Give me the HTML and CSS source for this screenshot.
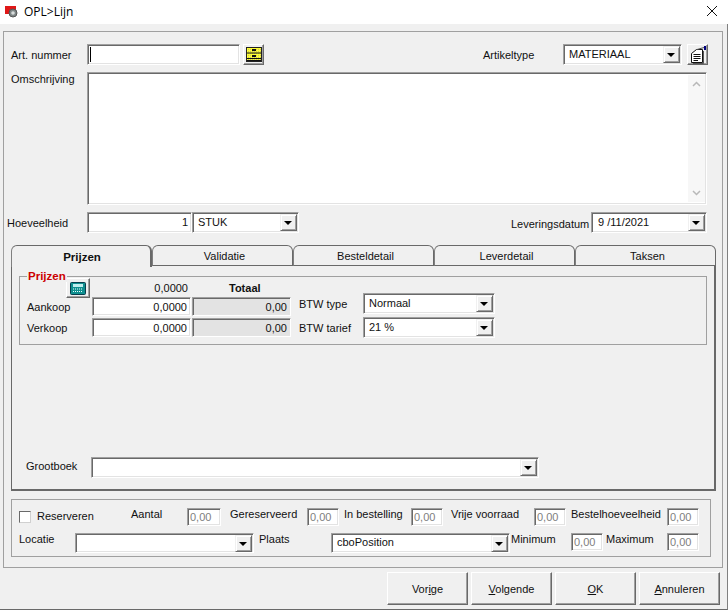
FILE: index.html
```html
<!DOCTYPE html>
<html lang="en">
<head>
<meta charset="UTF-8" />
<title>OPL&gt;Lijn</title>
<link rel="stylesheet" href="styles.css">
</head>
<body>

<div class="window">
  <header class="titlebar">
    <svg class="app-icon" width="16" height="16" viewBox="0 0 16 16">
      <rect x="0" y="3" width="11" height="8" fill="#e01818"/>
      <circle cx="8" cy="10" r="4" fill="#7e8686" stroke="#555" stroke-width="1"/>
      <circle cx="8" cy="10" r="1.8" fill="#d8dcdc"/>
    </svg>
    <span class="title">OPL&gt;Lijn</span>
    <svg class="close" width="12" height="12" viewBox="0 0 12 12">
      <path d="M1 1 L11 11 M11 1 L1 11" stroke="#111" stroke-width="1" fill="none"/>
    </svg>
  </header>

  <div class="client">
    <main class="panel">
      <div class="row">
        <label class="lbl-main">Art. nummer</label>
        <div class="field art-input"><span class="caret"></span></div>
        <button class="tool tool-drawer">
          <svg width="16" height="15" viewBox="0 0 16 15">
            <defs>
              <pattern id="dither" width="2" height="2" patternUnits="userSpaceOnUse">
                <rect width="2" height="2" fill="#ffff33"/>
                <rect width="1" height="1" fill="#c8c860"/>
              </pattern>
            </defs>
            <rect x="0.5" y="0.5" width="15" height="14" fill="url(#dither)" stroke="#222"/>
            <path d="M1 6 H15 M1 11.5 H15 M1 13.5 H15" stroke="#111"/>
            <rect x="6" y="2" width="4" height="2" fill="#111"/>
            <rect x="6" y="8" width="4" height="2" fill="#111"/>
          </svg>
        </button>
        <label class="lbl-type">Artikeltype</label>
        <div class="field combo type-combo"><span class="combo-text">MATERIAAL</span><span class="drop"></span></div>
        <button class="tool tool-props">
          <svg width="18" height="18" viewBox="0 0 18 18">
            <path d="M2.5 7.5 L7.5 3.5 H13.5 V16.5 H2.5 Z" fill="#fff" stroke="#111"/>
            <path d="M4.5 8.5 H11.5 M4.5 10.5 H11.5 M4.5 12.5 H11.5 M4.5 14.5 H9" stroke="#111"/>
            <path d="M8 3.5 L15 1.5 M14.5 5 V17.5 H4" stroke="#555" fill="none"/>
            <rect x="15" y="0" width="2" height="4" fill="#000080"/>
          </svg>
        </button>
      </div>

      <div class="row row-memo">
        <label class="lbl-main">Omschrijving</label>
        <div class="field memo">
          <div class="scrollbar">
            <svg width="9" height="6" viewBox="0 0 9 6"><path d="M1 5 L4.5 1.5 L8 5" stroke="#b8b8b8" stroke-width="1.5" fill="none"/></svg>
            <svg width="9" height="6" viewBox="0 0 9 6"><path d="M1 1 L4.5 4.5 L8 1" stroke="#b8b8b8" stroke-width="1.5" fill="none"/></svg>
          </div>
        </div>
      </div>

      <div class="row row-qty">
        <label class="lbl-main">Hoeveelheid</label>
        <div class="field qty-input">1</div>
        <div class="field combo unit-combo"><span class="combo-text">STUK</span><span class="drop"></span></div>
        <label class="lbl-date">Leveringsdatum</label>
        <div class="field combo date-combo"><span class="combo-text">9 /11/2021</span><span class="drop"></span></div>
      </div>

      <section class="tabs">
        <ul class="tab-strip">
          <li class="tab active">Prijzen</li>
          <li class="tab">Validatie</li>
          <li class="tab">Besteldetail</li>
          <li class="tab">Leverdetail</li>
          <li class="tab">Taksen</li>
        </ul>
        <div class="tab-body">
          <div class="group prices">
            <span class="legend">Prijzen</span>
            <div class="price-grid">
              <button class="tool tool-calc">
                <svg width="16" height="13" viewBox="0 0 16 13">
                  <rect x="0.5" y="0.5" width="15" height="12" rx="1" fill="#0f8f8f" stroke="#063c4c"/>
                  <rect x="3" y="2" width="10" height="3" fill="#bfeeee"/>
                  <path d="M3 7 H13 M3 9.5 H13" stroke="#e8ffff" stroke-dasharray="1 1"/>
                </svg>
              </button>
              <span class="head-num">0,0000</span>
              <span class="head-total">Totaal</span>
              <label class="price-lbl">Aankoop</label>
              <div class="field price-input">0,0000</div>
              <div class="field price-total">0,00</div>
              <label class="price-lbl">Verkoop</label>
              <div class="field price-input">0,0000</div>
              <div class="field price-total">0,00</div>
            </div>
            <div class="btw">
              <div class="btw-row">
                <label class="btw-lbl">BTW type</label>
                <div class="field combo btw-combo"><span class="combo-text">Normaal</span><span class="drop"></span></div>
              </div>
              <div class="btw-row">
                <label class="btw-lbl">BTW tarief</label>
                <div class="field combo btw-combo"><span class="combo-text">21 %</span><span class="drop"></span></div>
              </div>
            </div>
          </div>
          <div class="row ledger">
            <label class="ledger-lbl">Grootboek</label>
            <div class="field combo ledger-combo"><span class="combo-text"></span><span class="drop"></span></div>
          </div>
        </div>
      </section>

      <section class="group stock">
        <div class="stock-row stock-top">
          <label class="check"><span class="checkbox"></span>Reserveren</label>
          <span>Aantal</span>
          <div class="field small wide">0,00</div>
          <span>Gereserveerd</span>
          <div class="field small">0,00</div>
          <span>In bestelling</span>
          <div class="field small">0,00</div>
          <span>Vrije voorraad</span>
          <div class="field small">0,00</div>
          <span>Bestelhoeveelheid</span>
          <div class="field small">0,00</div>
        </div>
        <div class="stock-row stock-bottom">
          <span>Locatie</span>
          <div class="field combo stock-combo"><span class="combo-text"></span><span class="drop"></span></div>
          <span>Plaats</span>
          <div class="field combo stock-combo"><span class="combo-text">cboPosition</span><span class="drop"></span></div>
          <span>Minimum</span>
          <div class="field small">0,00</div>
          <span>Maximum</span>
          <div class="field small">0,00</div>
        </div>
      </section>
    </main>

    <footer class="actions">
      <button class="action">Vor<u>i</u>ge</button>
      <button class="action"><u>V</u>olgende</button>
      <button class="action"><u>O</u>K</button>
      <button class="action"><u>A</u>nnuleren</button>
    </footer>
  </div>
</div>

</body>
</html>
```

FILE: styles.css
```css
* {
  box-sizing: border-box;
}
body {
  margin: 0;
  font-family: "Liberation Sans", Arial, sans-serif;
  font-size: 11px;
  color: #111;
  background: #f0f0f0;
}
.window {
  width: 728px;
  height: 610px;
  overflow: hidden;
  display: flex;
  flex-direction: column;
}

/* title bar */
.titlebar {
  height: 24px;
  background: #fff;
  display: flex;
  align-items: center;
  padding: 0 10px 2px 5px;
}
.title {
  margin-left: 3px;
  font-family: "Open Sans", sans-serif;
  font-size: 12px;
  color: #000;
}
.close {
  margin-left: auto;
}

.client {
  flex: 1;
  border-right: 1px solid #808080;
  border-bottom: 1px solid #696969;
}

/* main frame */
.panel {
  margin: 7px 0 0 3px;
  width: 720px;
  height: 537px;
  border: 1px solid #a0a0a0;
  padding: 12px 0 0 0;
}
.row {
  display: flex;
  align-items: center;
}
.lbl-main {
  width: 83px;
  padding-left: 7px;
}
.row-memo {
  margin-top: 7px;
  align-items: flex-start;
}
.row-memo .lbl-main {
  padding-top: 1px;
}
.row-qty {
  margin-top: 7px;
}
.row-qty .lbl-main {
  padding-left: 3px;
  padding-top: 1px;
}

/* sunken controls */
.field {
  height: 21px;
  background: #fff;
  border: 1px solid;
  border-color: #a0a0a0 #fff #fff #a0a0a0;
  box-shadow: inset 1px 1px 0 #696969, inset -1px -1px 0 #e3e3e3;
  display: flex;
  align-items: center;
  flex-shrink: 0;
}
.art-input {
  width: 153px;
  padding-left: 2px;
}
.caret {
  width: 1px;
  height: 15px;
  background: #000;
}
.combo {
  padding: 0 1px 0 5px;
  justify-content: space-between;
}
.combo-text {
  padding-bottom: 2px;
}
.drop {
  width: 17px;
  height: 17px;
  background: #f0f0f0;
  border: 1px solid;
  border-color: #f0f0f0 #696969 #696969 #f0f0f0;
  box-shadow: inset 1px 1px 0 #fff, inset -1px -1px 0 #a0a0a0;
  position: relative;
  flex-shrink: 0;
}
.drop::after {
  content: "";
  position: absolute;
  left: 3px;
  top: 6px;
  border: 4px solid transparent;
  border-top: 4px solid #000;
  border-bottom: 0;
}

/* raised tool buttons */
.tool {
  width: 21px;
  height: 21px;
  padding: 0;
  background: #f0f0f0;
  border: 1px solid;
  border-color: #fff #696969 #696969 #fff;
  box-shadow: inset -1px -1px 0 #a0a0a0;
  display: flex;
  align-items: center;
  justify-content: center;
}
.tool-drawer {
  margin-left: 3px;
}
.lbl-type {
  margin-left: 219px;
  width: 80px;
}
.type-combo {
  width: 119px;
}
.tool-props {
  margin-left: 5px;
}

.memo {
  width: 620px;
  height: 133px;
  justify-content: flex-end;
  align-items: stretch;
  padding: 2px 1px 2px 0;
}
.scrollbar {
  width: 17px;
  background: #f7f7f7;
  display: flex;
  flex-direction: column;
  justify-content: space-between;
  align-items: center;
  padding: 6px 0;
}
.qty-input {
  width: 105px;
  justify-content: flex-end;
  padding: 0 3px 2px 0;
}
.unit-combo {
  width: 107px;
}
.lbl-date {
  margin-left: 212px;
  width: 80px;
  padding-top: 3px;
}
.date-combo {
  width: 116px;
  padding-left: 6px;
}

/* tabs */
.tabs {
  margin: 12px 0 0 7px;
  width: 705px;
  height: 246px;
  display: flex;
  flex-direction: column;
}
.tab-strip {
  list-style: none;
  margin: 0;
  padding: 0;
  display: flex;
  height: 21px;
}
.tab {
  width: 141px;
  height: 21px;
  border: 1px solid #696969;
  border-left-color: #808080;
  border-radius: 6px 6px 0 0;
  text-align: center;
  padding: 4px 0 0 4px;
}
.tab.active {
  height: 22px;
  border-bottom: 0;
  border-right-width: 2px;
  background: #f0f0f0;
  position: relative;
  z-index: 1;
  font-weight: bold;
  font-size: 11.5px;
  padding: 5px 0 0 2px;
}
.tab-body {
  flex: 1;
  border: 1px solid #696969;
  border-top: 0;
  border-right-width: 2px;
  border-bottom-width: 2px;
  padding: 10px 7px 0 7px;
  display: flex;
  flex-direction: column;
}

/* grouped boxes */
.group {
  border: 1px solid #a0a0a0;
  position: relative;
}
.prices {
  height: 69px;
  display: flex;
}
.legend {
  position: absolute;
  left: 7px;
  top: -7px;
  padding: 0 1px;
  background: #f0f0f0;
  color: #cc0000;
  font-size: 11.5px;
  font-weight: bold;
}
.price-grid {
  width: 271px;
  display: grid;
  grid-template-columns: 71px 99px 99px;
  grid-template-rows: 20px 21px 19px;
  column-gap: 1px;
}
.tool-calc {
  width: 24px;
  height: 20px;
  justify-self: end;
  margin: 1px 1px 0 0;
}
.head-num {
  text-align: right;
  padding: 5px 3px 0 0;
}
.head-total {
  font-weight: bold;
  padding: 5px 0 0 37px;
}
.price-input,
.price-total {
  height: 19px;
  justify-content: flex-end;
  padding-right: 3px;
}
.price-lbl {
  padding: 4px 0 0 7px;
}
.price-total {
  background: #e3e3e3;
}
.btw {
  margin-left: 8px;
  padding-top: 16px;
  display: flex;
  flex-direction: column;
  gap: 3px;
}
.btw-row {
  display: flex;
  align-items: center;
}
.btw-lbl {
  width: 64px;
}
.btw-combo {
  width: 132px;
}
.ledger {
  margin-top: auto;
  margin-bottom: 11px;
}
.ledger-lbl {
  width: 65px;
  margin-left: 7px;
  padding-bottom: 4px;
}
.ledger-combo {
  width: 448px;
}

/* stock block */
.stock {
  margin: 8px 0 0 7px;
  width: 700px;
  height: 58px;
  padding: 8px 0 0 7px;
}
.stock-row {
  display: grid;
  align-items: start;
  line-height: 13px;
}
.stock-top {
  grid-template-columns: 112px 56px 43px 77px 37px 67px 40px 83px 37px 96px 32px;
}
.stock-bottom {
  margin-top: 7px;
  grid-template-columns: 56px 184px 72px 180px 60px 35px 61px 32px;
}
.check {
  display: flex;
  align-items: center;
  padding-top: 2px;
}
.checkbox {
  width: 12px;
  height: 12px;
  margin-right: 6px;
  background: #fff;
  border: 1px solid #696969;
  border-right-color: #d0d0d0;
  border-bottom-color: #d0d0d0;
}
.small {
  width: 32px;
  height: 18px;
  color: #808080;
  padding-left: 2px;
}
.small.wide {
  width: 34px;
}
.stock-combo {
  width: 179px;
  height: 20px;
}

/* bottom buttons */
.actions {
  display: flex;
  justify-content: flex-end;
  gap: 3px;
  padding: 4px 7px 0 0;
}
.action {
  width: 81px;
  height: 33px;
  font: inherit;
  color: #111;
  background: #f0f0f0;
  border: 1px solid;
  border-color: #fff #696969 #696969 #fff;
  box-shadow: inset -1px -1px 0 #a0a0a0;
}
```
